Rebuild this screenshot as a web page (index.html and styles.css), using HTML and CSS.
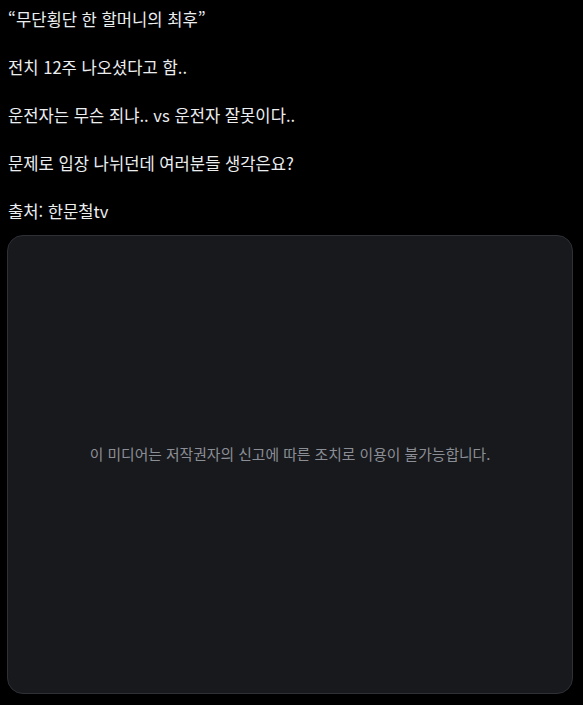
FILE: index.html
```html
<!DOCTYPE html>
<html lang="ko">
<head>
<meta charset="utf-8">
<link rel="stylesheet" href="styles.css">
</head>
<body>
<div class="post">
  <div class="text">
    <p>“무단횡단 한 할머니의 최후”</p>
    <p>전치 12주 나오셨다고 함..</p>
    <p>운전자는 무슨 죄냐.. vs 운전자 잘못이다..</p>
    <p>문제로 입장 나뉘던데 여러분들 생각은요?</p>
    <p>출처: 한문철tv</p>
  </div>
  <div class="media">
    <span class="notice">이 미디어는 저작권자의 신고에 따른 조치로 이용이 불가능합니다.</span>
  </div>
</div>
</body>
</html>
```

FILE: styles.css
```css
html, body {
  margin: 0;
  padding: 0;
  background: #000;
}
.post {
  padding: 7px 10px 0 7px;
  font-family: "Noto Sans CJK KR", "Noto Sans", sans-serif;
  color: #eceef0;
}
.text {
  font-size: 16.6px;
  line-height: 24px;
  padding-left: 1px;
}
.text p {
  margin: 0 0 24px 0;
}
.text p:last-child {
  margin-bottom: 0;
}
.media {
  margin-top: 12px;
  border: 1px solid #2f3036;
  border-radius: 16px;
  background: #18191d;
  display: flex;
  align-items: center;
  justify-content: center;
  padding-bottom: 22px;
  box-sizing: border-box;
  height: 459px;
}
.notice {
  font-size: 14.8px;
  color: #8b8e95;
}
```
